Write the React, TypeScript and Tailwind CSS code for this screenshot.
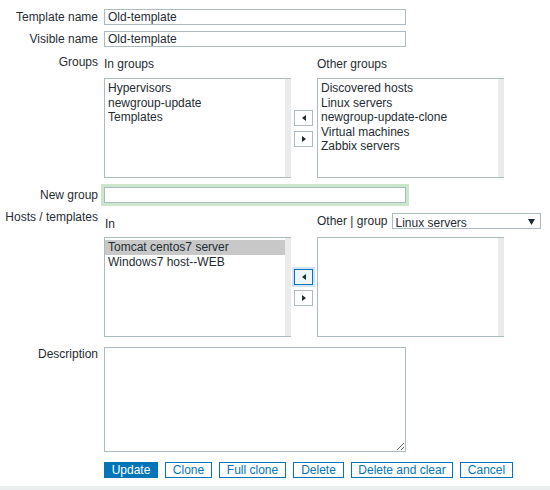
import React from "react";

const inGroups = ["Hypervisors", "newgroup-update", "Templates"];
const otherGroups = [
  "Discovered hosts",
  "Linux servers",
  "newgroup-update-clone",
  "Virtual machines",
  "Zabbix servers",
];
const inHosts = ["Tomcat centos7 server", "Windows7 host--WEB"];

function ListBox({ items, selected }: { items: string[]; selected?: number }) {
  return (
    <div className="flex h-[100px] w-[187px] border-y border-l border-[#acbbc2] bg-white">
      <div className="flex-1 pt-[2px] leading-[14.5px]">
        {items.map((it, i) => (
          <div
            key={it}
            className={`px-[3px] whitespace-nowrap ${i === selected ? "bg-[#c8c8c8]" : ""}`}
          >
            {it}
          </div>
        ))}
      </div>
      <div className="w-[6px] bg-[#ebebeb]" />
    </div>
  );
}

function Arrow({ dir }: { dir: "l" | "r" }) {
  return (
    <svg width="4" height="6" viewBox="0 0 4 6">
      {dir === "l" ? (
        <polygon points="4,0 4,6 0,3" fill="#1f2c33" />
      ) : (
        <polygon points="0,0 0,6 4,3" fill="#1f2c33" />
      )}
    </svg>
  );
}

function ArrowButtons({ focused }: { focused?: boolean }) {
  return (
    <div className="flex h-[100px] w-[26px] flex-col justify-center gap-[5px] pl-[3px]">
      <div
        className={`flex h-[16px] w-[19px] items-center justify-center border ${
          focused
            ? "border-[#0275b8] bg-[#eef6fc] shadow-[0_0_0_2px_#cfe5f5]"
            : "border-[#acbbc2] bg-white"
        }`}
      >
        <Arrow dir="l" />
      </div>
      <div className="flex h-[16px] w-[19px] items-center justify-center border border-[#acbbc2] bg-white">
        <Arrow dir="r" />
      </div>
    </div>
  );
}

const buttons = [
  { t: "Clone", w: "w-[47px]" },
  { t: "Full clone", w: "w-[67px]" },
  { t: "Delete", w: "w-[51px]" },
  { t: "Delete and clear", w: "w-[102px]" },
  { t: "Cancel", w: "w-[53px]" },
];

export default function App() {
  return (
    <div className="flex h-[490px] w-[550px] flex-col bg-white font-['Liberation_Sans',Arial,sans-serif] text-[12px] leading-[14px] text-[#1f2c33]">
      {/* Template name */}
      <div className="mt-[9px] flex h-[16px] items-center">
        <div className="w-[98px] text-right">Template name</div>
        <input
          readOnly
          value="Old-template"
          className="ml-[6px] h-[16px] w-[302px] border border-[#acbbc2] px-[3px] leading-[14px] outline-none"
        />
      </div>
      <div className="mt-[6px] flex h-[16px] items-center">
        <div className="w-[98px] text-right">Visible name</div>
        <input
          readOnly
          value="Old-template"
          className="ml-[6px] h-[16px] w-[302px] border border-[#acbbc2] px-[3px] leading-[14px] outline-none"
        />
      </div>

      {/* Groups */}
      <div className="mt-[8px] flex">
        <div className="w-[98px] text-right">Groups</div>
        <div className="ml-[6px] pt-[2px]">
          <div className="flex">
            <div className="w-[213px]">In groups</div>
            <div>Other groups</div>
          </div>
          <div className="mt-[7px] flex">
            <ListBox items={inGroups} />
            <ArrowButtons />
            <ListBox items={otherGroups} />
          </div>
        </div>
      </div>

      {/* New group */}
      <div className="mt-[9px] flex h-[16px] items-center">
        <div className="w-[98px] text-right">New group</div>
        <input
          readOnly
          value=""
          className="ml-[6px] h-[16px] w-[302px] border border-[#acbbc2] px-[3px] shadow-[0_0_0_3px_#cbe6cb] outline-none"
        />
      </div>

      {/* Hosts / templates */}
      <div className="mt-[7px] flex">
        <div className="w-[98px] text-right">Hosts / templates</div>
        <div className="ml-[6px] pt-[3px]">
          <div className="flex h-[16px] items-center">
            <div className="w-[213px] pl-[1px] pt-[5px]">In</div>
            <div className="flex items-center">
              <span>Other | group</span>
              <div className="ml-[4px] flex h-[16px] w-[149px] items-center justify-between overflow-hidden border border-[#acbbc2] pl-[3px] pr-[5px]">
                <span className="pt-[3px]">Linux servers</span>
                <svg width="7" height="7" viewBox="0 0 7 7">
                  <polygon points="0,1 7,1 3.5,7" fill="#1f2c33" />
                </svg>
              </div>
            </div>
          </div>
          <div className="mt-[8px] flex">
            <ListBox items={inHosts} selected={0} />
            <ArrowButtons focused />
            <ListBox items={[]} />
          </div>
        </div>
      </div>

      {/* Description */}
      <div className="mt-[10px] flex">
        <div className="w-[98px] text-right">Description</div>
        <textarea
          readOnly
          className="ml-[6px] h-[105px] w-[302px] border border-[#acbbc2] outline-none"
        />
      </div>

      {/* Buttons */}
      <div className="mt-[10px] flex gap-[7px] pl-[104px]">
        <button className="h-[16px] w-[54px] bg-[#0275b8] text-white">
          Update
        </button>
        {buttons.map((b) => (
          <button
            key={b.t}
            className={`h-[16px] ${b.w} border border-[#0275b8] bg-white text-[#0275b8]`}
          >
            {b.t}
          </button>
        ))}
      </div>

      <div className="mt-auto h-[4px] bg-[#ebeeef]" />
    </div>
  );
}
